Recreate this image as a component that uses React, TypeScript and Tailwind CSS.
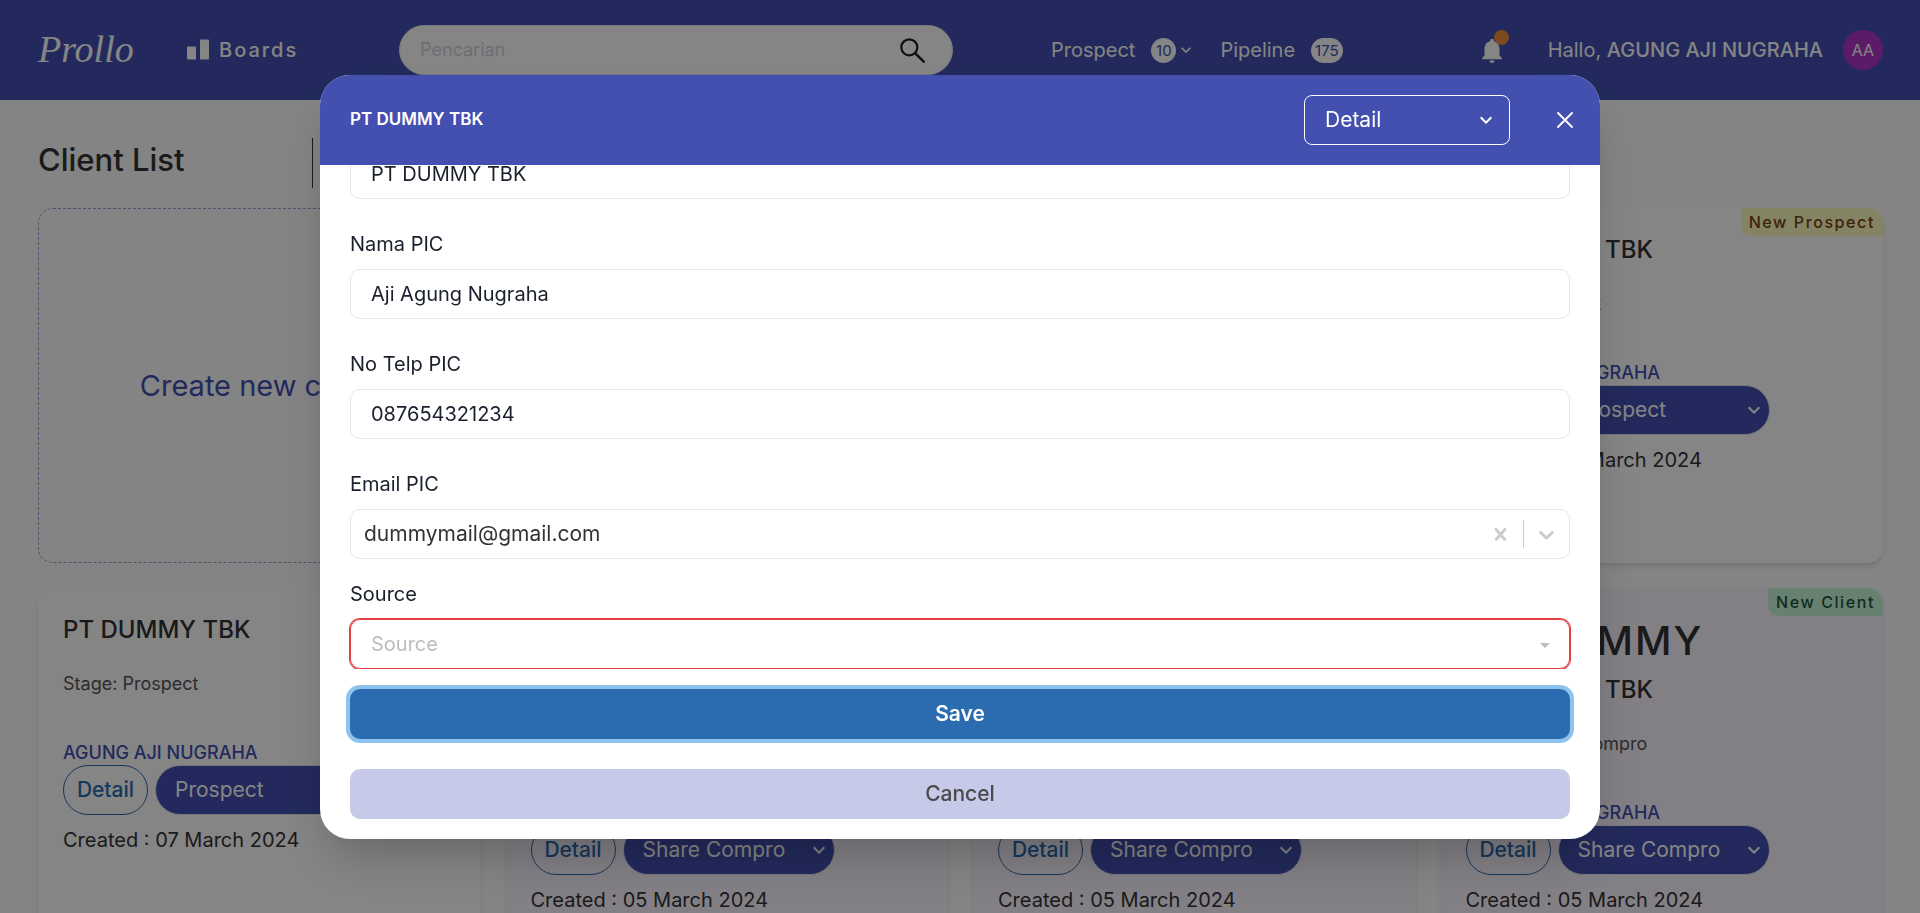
import { useId } from "react";
import type { ReactNode } from "react";

function Chevron({ className }: { className: string }) {
  return (
    <svg viewBox="0 0 24 24" className={className} fill="currentColor" aria-hidden="true">
      <path d="M16.59 8.59 12 13.17 7.41 8.59 6 10l6 6 6-6z" />
    </svg>
  );
}

function CountBadge({ children }: { children: ReactNode }) {
  return (
    <span className="flex h-[25px] min-w-[25px] items-center justify-center rounded-full bg-white px-1 text-[15px] text-[#4350b0]">
      {children}
    </span>
  );
}

function TopBar() {
  return (
    <header className="flex h-[100px] items-center bg-[#4350b0] pr-[37px] pl-[38px] text-xl text-white">
      <a href="#home" className="w-[149px] text-[38px] italic [font-family:'Liberation_Serif',cursive]">
        Prollo
      </a>
      <a href="#boards" className="flex w-[212px] items-center gap-[10px] font-medium tracking-widest">
        <svg viewBox="0 0 22 22" className="size-[22px]" fill="currentColor" aria-hidden="true">
          <rect x="0" y="7.5" width="9" height="13" rx="1" />
          <rect x="13" y="0.5" width="9" height="20" rx="1" />
        </svg>
        Boards
      </a>
      <form className="flex h-[50px] w-[554px] items-center rounded-full border border-gray-200 bg-white pr-[27px] pl-5">
        <input aria-label="Pencarian" placeholder="Pencarian" className="min-w-0 flex-1 bg-transparent text-lg text-black outline-none placeholder:text-[#cdd3dc]" />
        <button type="button" aria-label="Cari" className="text-black">
          <svg viewBox="0 0 25 25" className="size-[25px]" fill="none" stroke="#1a202c" strokeWidth="2.2" strokeLinecap="round" aria-hidden="true">
            <circle cx="9.3" cy="9.3" r="8" />
            <path d="m15.3 15.3 8.4 8.4" strokeWidth="2.6" />
          </svg>
        </button>
      </form>
      <nav className="ml-[98px] flex items-center">
        <button type="button" className="flex items-center gap-4">
          Prospect
          <span className="flex items-center">
            <CountBadge>10</CountBadge>
            <Chevron className="size-5" />
          </span>
        </button>
        <a href="#pipeline" className="ml-6 flex items-center gap-4">
          Pipeline
          <CountBadge>175</CountBadge>
        </a>
      </nav>
      <button type="button" aria-label="Notifikasi" className="relative ml-auto">
        <svg viewBox="4 2 16 20" className="h-[25px] w-5" fill="currentColor" aria-hidden="true">
          <path d="M12 22c1.1 0 2-.9 2-2h-4c0 1.1.89 2 2 2zm6-6v-5c0-3.07-1.64-5.64-4.5-6.32V4c0-.83-.67-1.5-1.5-1.5s-1.5.67-1.5 1.5v.68C7.63 5.36 6 7.92 6 11v5l-2 2v1h16v-1l-2-2z" />
        </svg>
        <span className="absolute -top-2 -right-[7px] size-[15px] rounded-full bg-[#f08c3a]" />
      </button>
      <p className="ml-[46px]">
        Hallo, <span className="font-medium">AGUNG AJI NUGRAHA</span>
      </p>
      <span className="ml-5 flex size-10 items-center justify-center rounded-full bg-[#b134c4] text-base">AA</span>
    </header>
  );
}

type Client = {
  heading?: string;
  stage: string;
  date: string;
  badge?: { text: string; className: string };
};

function ClientCard({ heading, stage, date, badge }: Client) {
  return (
    <article className={`relative min-h-[355px] rounded-[15px] px-[25px] pt-[23px] text-[#333333] shadow-md ${heading ? "bg-[#faf5ff]" : "bg-white"}`}>
      {badge && (
        <span className={`absolute top-0 right-0 rounded-tr-[15px] rounded-bl-[10px] px-2 text-base leading-7 font-medium tracking-widest ${badge.className}`}>
          {badge.text}
        </span>
      )}
      {heading && <h2 className="text-[40px] leading-[60px] font-medium tracking-wider">{heading}</h2>}
      <h3 className="text-2xl leading-[38px] font-medium">PT DUMMY TBK</h3>
      <p className="mt-[23px] text-lg leading-6 text-[#555555]">Stage: {stage}</p>
      <p className="mt-11 text-lg leading-[25px] font-medium text-[#4350b0]">AGUNG AJI NUGRAHA</p>
      <div className="flex gap-[7px]">
        <button type="button" className="h-[50px] w-[85px] rounded-full border border-[#2b6cb0] text-[21px] font-medium text-[#2b6cb0]">
          Detail
        </button>
        <span className="relative flex w-[212px]">
          <select aria-label="Stage" defaultValue={stage} className="h-[50px] w-full appearance-none rounded-full border border-gray-200 bg-[#4350b0] pr-8 pl-[19px] text-[21px] text-white">
            <option>{stage}</option>
          </select>
          <Chevron className="pointer-events-none absolute top-[13px] right-1 size-6 text-white" />
        </span>
      </div>
      <p className="mt-2 text-xl leading-[34px]">Created : {date}</p>
    </article>
  );
}

const shareCompro: Client = { heading: "PT DUMMY", stage: "Share Compro", date: "05 March 2024" };
const newProspect = { text: "New Prospect", className: "bg-[#fefcbf] text-[#744210]" };
const newClient = { text: "New Client", className: "bg-[#c6f6d5] text-[#22543d]" };

function Board() {
  return (
    <main className="pr-[37px] pb-10 pl-[38px]">
      <div className="flex h-[108px] items-center pt-[18px]">
        <h1 className="w-[274px] pb-[6px] text-[31px] font-medium text-[#333333]">Client List</h1>
        <span className="h-[50px] w-px bg-[#333333]" />
      </div>
      <div className="grid grid-cols-4 gap-[25px]">
        <button type="button" className="min-h-[355px] rounded-[15px] border border-dashed border-[#9b98cf] text-[29px] text-[#4350b0]">
          Create new client
        </button>
        <ClientCard stage="Prospect" date="07 March 2024" badge={newProspect} />
        <ClientCard stage="Prospect" date="07 March 2024" badge={newProspect} />
        <ClientCard stage="Prospect" date="07 March 2024" badge={newProspect} />
        <ClientCard stage="Prospect" date="07 March 2024" />
        <ClientCard {...shareCompro} badge={newClient} />
        <ClientCard {...shareCompro} badge={newClient} />
        <ClientCard {...shareCompro} badge={newClient} />
      </div>
    </main>
  );
}

const fieldClass = "h-[50px] w-full shrink-0 rounded-[10px] border border-gray-200 px-5 outline-none";

function TextField({ label, value }: { label: string; value: string }) {
  const id = useId();
  return (
    <div>
      <label htmlFor={id} className="mb-[10px] block leading-[30px]">
        {label}
      </label>
      <input id={id} defaultValue={value} className={fieldClass} />
    </div>
  );
}

function ClientDialog() {
  return (
    <section role="dialog" aria-modal="true" aria-label="PT DUMMY TBK" className="w-2/3 overflow-hidden rounded-[30px] bg-white text-xl text-[#1a202c] shadow-2xl">
      <header className="flex h-[90px] items-center bg-[#4350b0] pr-[27px] pl-[30px] text-white">
        <h2 className="flex-1 text-[17px] font-semibold">PT DUMMY TBK</h2>
        <span className="relative flex w-[206px]">
          <select aria-label="Tampilan" className="h-[50px] w-full appearance-none rounded-[8px] border border-white bg-transparent px-5 text-[21px]">
            <option>Detail</option>
          </select>
          <Chevron className="pointer-events-none absolute top-[13px] right-3 size-6" />
        </span>
        <button type="button" aria-label="Tutup" className="ml-[47px]">
          <svg viewBox="0 0 16 16" className="size-4" fill="none" stroke="currentColor" strokeWidth="1.8" strokeLinecap="round" aria-hidden="true">
            <path d="m1 1 14 14M15 1 1 15" />
          </svg>
        </button>
      </header>
      <div className="flex h-[504px] flex-col justify-end overflow-hidden px-[30px]">
        <div className="flex flex-col gap-[30px]">
          <input aria-label="Nama Perusahaan" defaultValue="PT DUMMY TBK" className={fieldClass} />
          <TextField label="Nama PIC" value="Aji Agung Nugraha" />
          <TextField label="No Telp PIC" value="087654321234" />
        </div>
        <div className="mt-[30px]">
          <label htmlFor="email" className="mb-[10px] block leading-[30px]">
            Email PIC
          </label>
          <div className="flex h-[50px] items-center rounded-[10px] border border-gray-200 pl-[13px] text-[#333333]">
            <input id="email" defaultValue="dummymail@gmail.com" className="min-w-0 flex-1 text-[21px] outline-none" />
            <button type="button" aria-label="Hapus" className="px-[10px] text-[#cccccc]">
              <svg viewBox="0 0 20 20" className="size-[25px]" fill="currentColor" aria-hidden="true">
                <path d="M14.348 14.849c-0.469 0.469-1.229 0.469-1.697 0l-2.651-3.030-2.651 3.029c-0.469 0.469-1.229 0.469-1.697 0-0.469-0.469-0.469-1.229 0-1.697l2.758-3.15-2.759-3.152c-0.469-0.469-0.469-1.228 0-1.697s1.228-0.469 1.697 0l2.652 3.031 2.651-3.031c0.469-0.469 1.228-0.469 1.697 0s0.469 1.229 0 1.697l-2.758 3.152 2.758 3.15c0.469 0.469 0.469 1.229 0 1.698z" />
              </svg>
            </button>
            <span className="h-7 w-px bg-[#cccccc]" />
            <button type="button" aria-label="Buka pilihan" className="px-[10px] text-[#cccccc]">
              <svg viewBox="0 0 20 20" className="size-[25px]" fill="currentColor" aria-hidden="true">
                <path d="M4.516 7.548c0.436-0.446 1.043-0.481 1.576 0l3.908 3.747 3.908-3.747c0.533-0.481 1.141-0.446 1.574 0 0.436 0.445 0.408 1.197 0 1.615-0.406 0.418-4.695 4.502-4.695 4.502-0.217 0.223-0.502 0.335-0.787 0.335s-0.57-0.112-0.789-0.335c0 0-4.287-4.084-4.695-4.502s-0.436-1.17 0-1.615z" />
              </svg>
            </button>
          </div>
        </div>
        <div className="mt-5">
          <label htmlFor="source" className="mb-[10px] block leading-[30px]">
            Source
          </label>
          <div className="relative flex">
            <select id="source" defaultValue="" className="h-[50px] w-full appearance-none rounded-[10px] border border-[#e53e3e] px-5 text-[#bdbdbd] shadow-[0_0_0_1px_#e53e3e] outline-none">
              <option value="">Source</option>
            </select>
            <svg viewBox="0 0 10 5" className="pointer-events-none absolute top-6 right-5 h-[5px] w-[10px]" fill="#bdbdbd" aria-hidden="true">
              <path d="M0 0h10L5 5z" />
            </svg>
          </div>
        </div>
      </div>
      <footer className="flex flex-col gap-[30px] px-[30px] py-5 text-[21px]">
        <button type="button" className="h-[50px] rounded-[10px] bg-[#2b6cb0] font-semibold text-white ring-4 ring-[#8ec3ee]">
          Save
        </button>
        <button type="button" className="h-[50px] rounded-[10px] bg-[#c6c9e8] font-medium text-[#4a4a4a]">
          Cancel
        </button>
      </footer>
    </section>
  );
}

export default function App() {
  return (
    <div className="h-screen overflow-hidden bg-[#fdfdfd] [font-family:Inter,sans-serif]">
      <TopBar />
      <Board />
      <div className="fixed inset-0 flex items-start justify-center bg-black/48 pt-[75px]">
        <ClientDialog />
      </div>
    </div>
  );
}
